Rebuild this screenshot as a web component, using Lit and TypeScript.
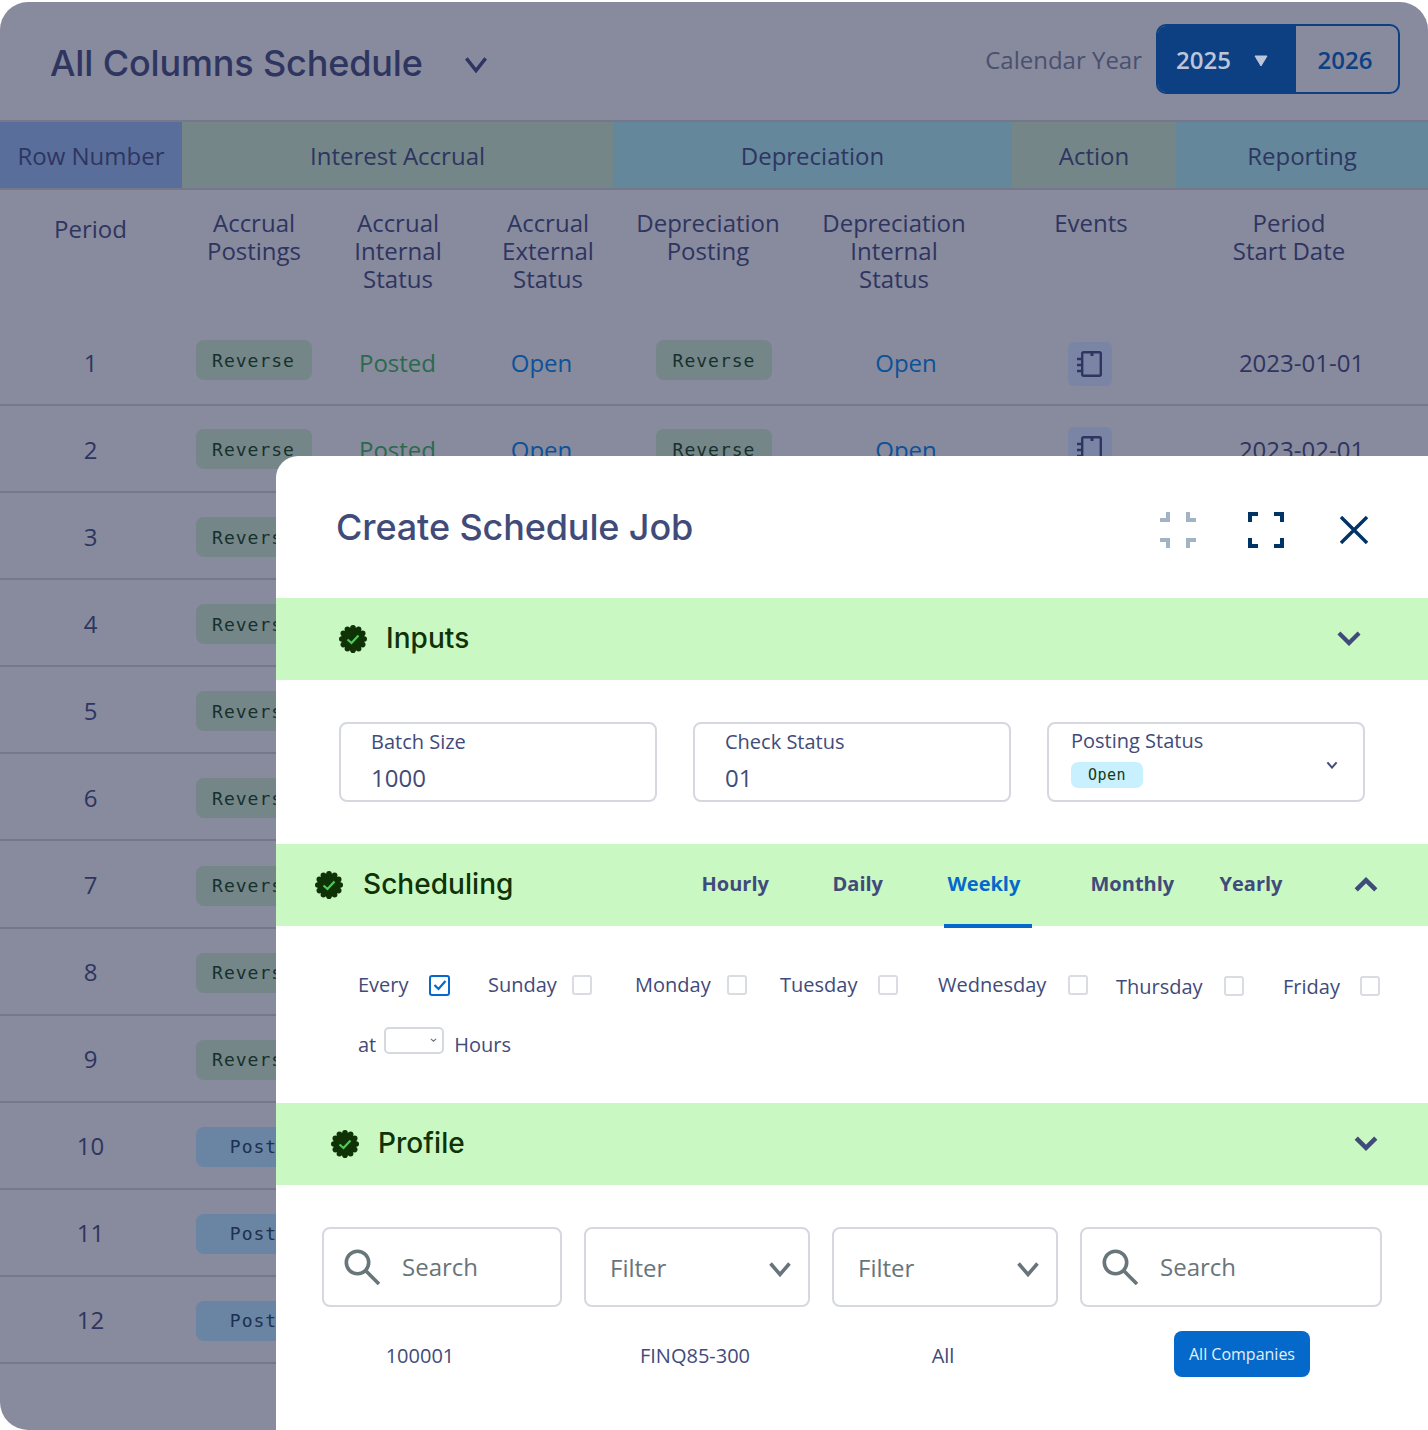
import { LitElement, html, css, svg, nothing } from "lit";
import { customElement } from "lit/decorators.js";

const chev = (w: number, h: number, sw: number, up = false) => html`<svg class="chev" width=${w} height=${h} viewBox="0 0 ${w} ${h}" fill="none" stroke="currentColor" stroke-width=${sw}>
  <path d=${up ? `M${sw * 0.7} ${h - sw * 0.7} L${w / 2} ${sw * 0.7} L${w - sw * 0.7} ${h - sw * 0.7}` : `M${sw * 0.7} ${sw * 0.7} L${w / 2} ${h - sw * 0.7} L${w - sw * 0.7} ${sw * 0.7}`}/></svg>`;

const seal = () => {
  const bumps = Array.from({ length: 12 }, (_, i) => {
    const a = (i * Math.PI) / 6;
    return svg`<circle cx=${14 + 11.2 * Math.cos(a)} cy=${14 + 11.2 * Math.sin(a)} r="2.8"/>`;
  });
  return html`<svg class="seal" width="28" height="28" viewBox="0 0 28 28"><g fill="#0f3206"><circle cx="14" cy="14" r="11.5"/>${bumps}</g>
  <path d="M8.5 14.5 L12.5 18 L19.5 10.5" fill="none" stroke="#4fc95a" stroke-width="2.2"/></svg>`;
};

const notebook = () => html`<svg width="26" height="28" viewBox="0 0 26 28" fill="none" stroke="#2e3560" stroke-width="2.4">
  <rect x="5.2" y="2.2" width="18.6" height="23.6" rx="1.5"/><path d="M0 9h5M0 15h5M0 21h5"/><path d="M15 2v4" stroke-width="3"/></svg>`;

const search = () => html`<svg class="glass" width="36" height="36" viewBox="0 0 36 36" fill="none" stroke="#68757a" stroke-width="3.6">
  <circle cx="13.5" cy="13.5" r="11.2"/><path d="M21.5 21.5 L35 35"/></svg>`;

const corners = (pts: string[], color: string) => html`<svg width="36" height="36" viewBox="0 0 36 36" fill="none" stroke=${color} stroke-width="4">${pts.map((d) => svg`<path d=${d}/>`)}</svg>`;

const groups = [
  { t: "Row Number", c: "g-blue" },
  { t: "Interest Accrual", c: "g-green" },
  { t: "Depreciation", c: "g-teal" },
  { t: "Action", c: "g-green" },
  { t: "Reporting", c: "g-teal" },
];
const heads = [["Period"], ["Accrual", "Postings"], ["Accrual", "Internal", "Status"], ["Accrual", "External", "Status"], ["Depreciation", "Posting"], ["Depreciation", "Internal", "Status"], ["Events"], ["Period", "Start Date"]];
const rows = Array.from({ length: 12 }, (_, i) => ({
  n: i + 1,
  badge: i < 9 ? "Reverse" : "Post",
  kind: i < 9 ? "rev" : "post",
  pos: i === 0 ? "r1" : i === 1 ? "r2" : "rn",
  date: `2023-${String(i + 1).padStart(2, "0")}-01`,
}));
const days = [
  { t: "Every", ml: 82, w: 92, on: true, low: false },
  { t: "Sunday", ml: 38, w: 104, on: false, low: false },
  { t: "Monday", ml: 43, w: 112, on: false, low: false },
  { t: "Tuesday", ml: 33, w: 118, on: false, low: false },
  { t: "Wednesday", ml: 40, w: 150, on: false, low: false },
  { t: "Thursday", ml: 28, w: 128, on: false, low: true },
  { t: "Friday", ml: 39, w: 97, on: false, low: true },
];
const tabs = [
  { t: "Hourly", ml: 184, w: 131 },
  { t: "Daily", ml: 0, w: 115 },
  { t: "Weekly", ml: 0, w: 143, on: true },
  { t: "Monthly", ml: 0, w: 129 },
  { t: "Yearly", ml: 0, w: 133 },
];

@customElement("app-root")
export class AppRoot extends LitElement {
  static styles = css`
    :host { display: block; position: relative; width: 1428px; height: 1430px; overflow: hidden; background: #fff; font-family: "Open Sans", sans-serif; color: #2e3560; }
    * { box-sizing: border-box; }
    .chev { display: block; }

    .panel { margin-top: 2px; height: 1428px; background: #888a9d; border-radius: 28px 28px 0 28px; overflow: hidden; font-size: 24px; }
    .top { height: 118px; display: flex; align-items: center; padding: 0 28px 0 50px; }
    .title { font-family: Inter, sans-serif; font-weight: 500; font-size: 36px; letter-spacing: -0.15px; margin-top: 4px; }
    .top .chev { margin: 6px 0 0 41px; color: #2e3560; }
    .cal { margin-left: auto; color: #4a5070; margin-bottom: 4px; }
    .toggle { margin: 0 0 4px 14px; width: 244px; height: 70px; border: 2px solid #0c4083; border-radius: 10px; display: flex; overflow: hidden; font-weight: 600; }
    .y-on { width: 138px; background: #0c4083; color: #bcc5d9; display: flex; align-items: center; padding-left: 18px; }
    .y-on svg { margin: 4px 0 0 23px; }
    .y-off { flex: 1; display: flex; align-items: center; justify-content: center; color: #0c4083; padding-right: 4px; }

    .groups { height: 70px; border-top: 2px solid #75778b; border-bottom: 2px solid #75778b; display: grid; grid-template-columns: 182px 431px 399px 164px 252px; }
    .groups > div { display: flex; align-items: center; justify-content: center; }
    .g-blue { background: #5a6e9b; } .g-green { background: #748688; } .g-teal { background: #64879c; }

    .heads { height: 129px; padding-top: 19px; display: grid; grid-template-columns: 181px 146px 142px 158px 162px 210px 184px 212px; line-height: 28px; text-align: center; }
    .heads > div:first-child { padding-top: 6px; }

    .row { height: 87.09px; padding-top: 1px; border-bottom: 2px solid #75778b; display: grid; grid-template-columns: 181px 145px 143px 145px 200px 184px 184px 239px; align-items: center; justify-items: center; }
    .badge { width: 116px; height: 40px; border-radius: 8px; display: flex; align-items: center; justify-content: center; font-family: "DejaVu Sans Mono", monospace; font-size: 18px; letter-spacing: 1px; }
    .r1 .badge { margin-bottom: 4px; }
    .rn .badge { margin-top: 2px; }
    .r1 .note { margin-top: 4px; }
    .rev { background: #748688; color: #16302c; }
    .post { background: #6a84a3; color: #1d3050; }
    .posted { color: #2a6a4c; }
    .open { color: #0c5299; }
    .note { width: 44px; height: 44px; border-radius: 6px; background: #7a85a5; display: flex; align-items: center; justify-content: center; }

    .modal { position: absolute; left: 276px; top: 456px; right: 0; bottom: 0; background: #fff; border-top-left-radius: 22px; color: #414b7a; }
    .m-head { height: 142px; display: flex; align-items: center; padding-left: 60px; }
    .m-title { font-family: Inter, sans-serif; font-weight: 500; font-size: 36px; letter-spacing: -0.12px; margin-top: -1px; }
    .m-icons { margin-left: auto; display: flex; align-items: center; margin-right: 60px; gap: 52px; margin-top: 6px; }
    .m-icons svg { display: block; }
    .m-icons .x { margin-left: 4px; }

    .band { height: 82px; background: #c9f8c3; display: flex; align-items: center; color: #0f3206; position: relative; }
    .band-t { font-family: Inter, sans-serif; font-weight: 500; font-size: 28px; letter-spacing: 0.05px; margin: -2px 0 0 19px; }
    .band .chev { margin-left: auto; margin-top: -2px; color: #414b7a; }
    .b1 { padding: 0 66px 0 63px; }
    .b2 { padding: 0 49px 0 39px; }
    .b2 .band-t { margin-left: 20px; }
    .b2 .chev { margin-top: 0; }
    .b3 { padding: 0 49px 0 55px; }

    .tabs { display: flex; align-self: stretch; }
    .tab { position: relative; display: flex; align-items: center; padding: 0 0 3px 4px; font-weight: 700; font-size: 20px; color: #414b7a; }
    .tab.on { color: #0469ca; }
    .tab.on::after { content: ""; position: absolute; left: 0; width: 88px; bottom: -2px; height: 4px; background: #0469ca; }

    .fields { height: 164px; padding: 42px 63px; display: flex; gap: 36px; }
    .field { width: 318px; height: 80px; border: 2px solid #d5d8de; border-radius: 8px; padding-left: 30px; position: relative; display: flex; flex-direction: column; }
    .f-label { font-size: 20px; line-height: 24px; margin-top: 6px; }
    .f-val { font-size: 24px; line-height: 32px; margin-top: 8px; }
    .sel { padding-left: 22px; }
    .sel .f-label { margin-top: 5px; }
    .pill { margin-top: 9px; width: 72px; height: 26px; border-radius: 7px; background: #c9f0ff; color: #173a0e; display: flex; align-items: center; justify-content: center; font-family: "DejaVu Sans Mono", monospace; font-size: 15px; letter-spacing: 0.5px; }
    .sel .chev { position: absolute; right: 25px; top: 37px; }

    .sched { height: 177px; font-size: 20px; padding-top: 47px; }
    .days { height: 24px; display: flex; align-items: center; }
    .day { display: flex; align-items: center; justify-content: space-between; flex: none; }
    .day > span:first-child { margin-top: -2px; }
    .day.low { margin-top: 2px; }
    .day.low > span:first-child { margin-top: 0; }
    .box { width: 20px; height: 20px; border: 2px solid #d9dce0; border-radius: 3px; display: block; }
    .box.on { width: 21px; height: 21px; border: 2.5px solid #0469ca; display: flex; align-items: center; justify-content: center; }
    .at { margin: 34px 0 0 82px; display: flex; align-items: center; height: 26px; }
    .mini { width: 60px; height: 27px; margin: -8px 10px 0 8px; border: 2px solid #d5d8de; border-radius: 5px; display: flex; align-items: center; justify-content: flex-end; padding-right: 5px; color: #68757a; }

    .filters { padding: 42px 0 0 46px; display: flex; gap: 22px; }
    .fbox { height: 80px; border: 2px solid #d5d8de; border-radius: 8px; display: flex; align-items: center; font-size: 24px; color: #68757a; }
    .w1 { width: 240px; } .w2 { width: 226px; } .w3 { width: 302px; }
    .srch { padding-left: 20px; }
    .srch span { margin: -2px 0 0 22px; }
    .flt { padding: 0 16px 0 24px; justify-content: space-between; }
    .flt .chev { margin-top: 3px; color: #68757a; }
    .vals { margin: 24px 0 0 46px; display: grid; grid-template-columns: 196px 354px 142px 296px; height: 46px; align-items: center; font-size: 20px; text-align: center; }
    .vals > div:not(.chip) { padding-top: 2px; }
    .chip { margin-left: 160px; width: 136px; height: 46px; border-radius: 8px; background: #0469ca; color: #e6eef8; font-size: 16px; display: flex; align-items: center; justify-content: center; }
  `;

  render() {
    return html`
      <div class="panel">
        <div class="top">
          <div class="title">All Columns Schedule</div>
          ${chev(24, 17, 3.4)}
          <div class="cal">Calendar Year</div>
          <div class="toggle">
            <div class="y-on">2025<svg width="14" height="12" viewBox="0 0 14 12"><path d="M1 1 H13 L7 11 Z" fill="#bcc5d9" stroke="#bcc5d9" stroke-linejoin="round"/></svg></div>
            <div class="y-off">2026</div>
          </div>
        </div>
        <div class="groups">${groups.map((g) => html`<div class=${g.c}>${g.t}</div>`)}</div>
        <div class="heads">${heads.map((h) => html`<div>${h.map((l) => html`${l}<br />`)}</div>`)}</div>
        ${rows.map(
          (r) => html`<div class="row ${r.pos}">
            <div>${r.n}</div>
            <div class="badge ${r.kind}">${r.badge}</div>
            ${r.n <= 2
              ? html`<div class="posted">Posted</div>
                  <div class="open">Open</div>
                  <div class="badge ${r.kind}">${r.badge}</div>
                  <div class="open">Open</div>
                  <div class="note">${notebook()}</div>
                  <div>${r.date}</div>`
              : nothing}
          </div>`
        )}
      </div>

      <div class="modal">
        <div class="m-head">
          <div class="m-title">Create Schedule Job</div>
          <div class="m-icons">
            ${corners(["M0 8H8V0", "M28 0V8H36", "M0 28H8V36", "M28 36V28H36"], "#a3b3c6")}
            ${corners(["M2 10V2H10", "M26 2H34V10", "M2 26V34H10", "M26 34H34V26"], "#003366")}
            <svg class="x" width="28" height="28" viewBox="0 0 28 28" fill="none" stroke="#003366" stroke-width="3.4"><path d="M1 1 L27 27 M27 1 L1 27"/></svg>
          </div>
        </div>

        <div class="band b1">${seal()}<div class="band-t">Inputs</div>${chev(26, 16, 4.2)}</div>
        <div class="fields">
          <div class="field"><div class="f-label">Batch Size</div><div class="f-val">1000</div></div>
          <div class="field"><div class="f-label">Check Status</div><div class="f-val">01</div></div>
          <div class="field sel"><div class="f-label">Posting Status</div><div class="pill">Open</div>${chev(12, 8, 2)}</div>
        </div>

        <div class="band b2">${seal()}<div class="band-t">Scheduling</div>
          <div class="tabs">${tabs.map((t) => html`<div class="tab ${t.on ? "on" : ""}" style="margin-left:${t.ml}px;width:${t.w}px">${t.t}</div>`)}</div>
          ${chev(26, 16, 4.6, true)}
        </div>
        <div class="sched">
          <div class="days">${days.map((d) => html`<div class="day ${d.low ? "low" : ""}" style="margin-left:${d.ml}px;width:${d.w}px"><span>${d.t}</span>${d.on
            ? html`<span class="box on"><svg width="14" height="12" viewBox="0 0 14 12" fill="none" stroke="#0469ca" stroke-width="2.2"><path d="M1.5 6 L5.5 10 L12.5 2"/></svg></span>`
            : html`<span class="box"></span>`}</div>`)}</div>
          <div class="at">at<div class="mini">${chev(7, 4, 1.2)}</div>Hours</div>
        </div>

        <div class="band b3">${seal()}<div class="band-t">Profile</div>${chev(26, 16, 4.6)}</div>
        <div class="filters">
          <div class="fbox w1 srch">${search()}<span>Search</span></div>
          <div class="fbox w2 flt"><span>Filter</span>${chev(24, 16, 3.6)}</div>
          <div class="fbox w2 flt"><span>Filter</span>${chev(24, 16, 3.6)}</div>
          <div class="fbox w3 srch">${search()}<span>Search</span></div>
        </div>
        <div class="vals"><div>100001</div><div>FINQ85-300</div><div>All</div><div class="chip">All Companies</div></div>
      </div>
    `;
  }
}
